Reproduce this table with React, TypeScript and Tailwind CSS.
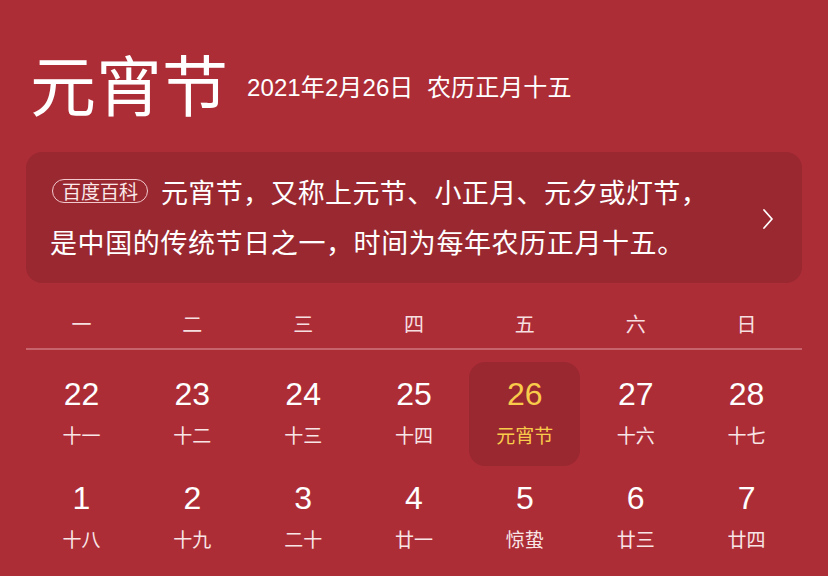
import React from "react";

const weekdays = ["一", "二", "三", "四", "五", "六", "日"];
const rows = [
  [
    ["22", "十一"],
    ["23", "十二"],
    ["24", "十三"],
    ["25", "十四"],
    ["26", "元宵节"],
    ["27", "十六"],
    ["28", "十七"],
  ],
  [
    ["1", "十八"],
    ["2", "十九"],
    ["3", "二十"],
    ["4", "廿一"],
    ["5", "惊蛰"],
    ["6", "廿三"],
    ["7", "廿四"],
  ],
];

const font = { fontFamily: '"Noto Sans CJK SC", "Noto Sans", sans-serif' };
const latin = { fontFamily: '"Liberation Sans", "Noto Sans CJK SC", sans-serif' };

export default function App() {
  return (
    <div
      className="w-[828px] h-[576px] overflow-hidden bg-[#ad2d37] text-white"
      style={font}
    >
      <div className="flex items-center pl-[30px] pt-[40px] h-[136px] box-border">
        <div className="text-[66px] leading-[88px] -mt-[12px]">元宵节</div>
        <div className="ml-[19px] mt-0 text-[24px] leading-[30px] tracking-[0.1px]" style={latin}>
          2021年2月26日&nbsp;&nbsp;农历正月十五
        </div>
      </div>
      <div className="mx-[26px] mt-[16px] h-[131px] rounded-[16px] bg-[#992831] pl-[24px] pr-[26px] pt-[15px] flex items-start relative">
        <div className="text-[27px] leading-[50px] tracking-[0.6px]">
          <span className="inline-flex items-center align-[4px] h-[24px] px-[9px] ml-[2px] mr-[13px] rounded-full border-[1.5px] border-[#f2c9cc] text-[19px] leading-none tracking-[0px] text-[#fbe9ea]">
            百度百科
          </span>
          <span className="tracking-[0.35px]">元宵节，又称上元节、小正月、元夕或灯节，</span>
          <br />
          是中国的传统节日之一，时间为每年农历正月十五。
        </div>
        <svg
          className="absolute right-[28px] top-[56px]"
          width="12"
          height="22"
          viewBox="0 0 12 22"
          fill="none"
        >
          <path d="M2 2 L10 11 L2 20" stroke="#ffffff" strokeWidth="1.8" strokeLinecap="round" strokeLinejoin="round" />
        </svg>
      </div>
      <div className="mx-[26px] mt-[17px]">
        <div className="grid grid-cols-7 h-[48px] items-center">
          {weekdays.map((w) => (
            <div key={w} className="text-center text-[20px] leading-[28px] text-[#f6dfe0]">
              {w}
            </div>
          ))}
        </div>
        <div className="h-[2px] bg-[#c7636b]" />
        <div className="mt-[12px]">
          {rows.map((row, ri) => (
            <div key={ri} className="grid grid-cols-7 h-[104px]">
              {row.map(([d, l]) => {
                const hl = d === "26";
                return (
                  <div key={d} className="flex justify-center">
                    <div
                      className={
                        "w-[111px] h-[104px] flex flex-col items-center rounded-[16px] " +
                        (hl ? "bg-[#9a2831] text-[#f9cb4b]" : "")
                      }
                    >
                      <div className="mt-[12px] text-[32px] leading-[40px]" style={latin}>
                        {d}
                      </div>
                      <div className={"mt-[8px] text-[19px] leading-[26px] " + (hl ? "" : "text-[#f8e6e7]")}>
                        {l}
                      </div>
                    </div>
                  </div>
                );
              })}
            </div>
          ))}
        </div>
      </div>
    </div>
  );
}
